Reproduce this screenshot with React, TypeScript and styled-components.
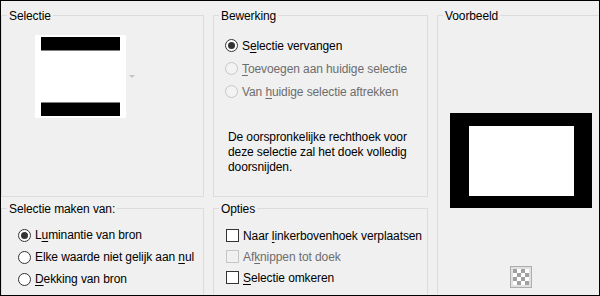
import React from 'react'
import styled, { createGlobalStyle } from 'styled-components'

const Global = createGlobalStyle`
  body {
    margin: 0;
    background: #ffffff;
  }
`

const Frame = styled.div`
  width: 600px;
  height: 296px;
  box-sizing: border-box;
  border: 1px solid #000;
  background: #f0f0f0;
  overflow: hidden;
  font-family: 'Liberation Sans', Arial, sans-serif;
  font-size: 12px;
  letter-spacing: -0.1px;
  color: #000;
  display: grid;
  grid-template-columns: 203px 215px 170px;
  grid-template-rows: 182px 100px;
  column-gap: 9px;
  row-gap: 11px;
  padding-top: 14px;
`

const Group = styled.section<{ $col: number; $row: string }>`
  position: relative;
  box-sizing: border-box;
  border: 1px solid #dcdcdc;
  grid-column: ${p => p.$col};
  grid-row: ${p => p.$row};
  display: flex;
  flex-direction: column;
`

const Legend = styled.span`
  position: absolute;
  top: -8px;
  left: 5px;
  padding: 0 2px;
  background: #f0f0f0;
  line-height: 16px;
  white-space: nowrap;
`

const ThumbRow = styled.div`
  display: flex;
  align-items: center;
  gap: 3px;
  padding: 19px 0 0 33px;
`

const Thumb = styled.div`
  width: 91px;
  height: 83px;
  box-sizing: border-box;
  background: #fff;
  padding: 2px 6px;
  display: flex;
  flex-direction: column;
  justify-content: space-between;
`

const Bar = styled.div<{ $top?: boolean }>`
  height: 13px;
  background: #000;
  ${p => (p.$top ? 'border-bottom: 1px solid #808080;' : 'border-top: 1px solid #808080;')}
`

const DropArrow = styled.span`
  width: 0;
  height: 0;
  border-left: 3px solid transparent;
  border-right: 3px solid transparent;
  border-top: 3px solid #c4c4c4;
`

const OptionList = styled.div<{ $pad: string }>`
  display: flex;
  flex-direction: column;
  padding: ${p => p.$pad};
`

const Option = styled.label<{ $h: number; $disabled?: boolean }>`
  display: flex;
  align-items: center;
  gap: 4px;
  height: ${p => p.$h}px;
  color: ${p => (p.$disabled ? '#6d6d6d' : '#000')};
  white-space: nowrap;
  line-height: 16px;
`

const RadioMark = styled.span<{ $checked?: boolean; $disabled?: boolean }>`
  width: 13px;
  height: 13px;
  box-sizing: border-box;
  border-radius: 50%;
  border: 1px solid ${p => (p.$disabled ? '#c6c6c6' : '#333')};
  background: ${p => (p.$disabled ? '#f3f3f3' : '#fff')};
  display: flex;
  align-items: center;
  justify-content: center;
  flex: none;

  &::after {
    content: '';
    display: ${p => (p.$checked ? 'block' : 'none')};
    width: 7px;
    height: 7px;
    border-radius: 50%;
    background: #333;
  }
`

const CheckMark = styled.span<{ $disabled?: boolean }>`
  width: 13px;
  height: 13px;
  box-sizing: border-box;
  border: 1px solid ${p => (p.$disabled ? '#c6c6c6' : '#333')};
  background: ${p => (p.$disabled ? '#f0f0f0' : '#fff')};
  flex: none;
`

const Key = styled.u`
  text-decoration-thickness: 1px;
  text-underline-offset: 2px;
`

const Note = styled.p`
  margin: 27px 0 0 14px;
  line-height: 15px;
`

const PreviewArea = styled.div`
  display: flex;
  flex-direction: column;
  align-items: flex-start;
  padding: 97px 0 0 12px;
`

const PreviewFrame = styled.div`
  border-style: solid;
  border-color: #000;
  border-width: 13px 18px 12px 19px;
  width: 105px;
  height: 70px;
  background: #fff;
`

const CheckerButton = styled.button`
  margin: 58px 0 0 60px;
  width: 22px;
  height: 22px;
  padding: 0;
  box-sizing: border-box;
  border: 1px solid #adadad;
  background: #e1e1e1;
  display: flex;
  align-items: center;
  justify-content: center;
`

const Checker = () => (
  <svg width="16" height="16" viewBox="0 0 16 16">
    <rect width="16" height="16" fill="#fff" />
    {[0, 1, 2, 3].map(r =>
      [0, 1, 2, 3].map(c =>
        (r + c) % 2 === 0 ? <rect key={`${r}-${c}`} x={c * 4} y={r * 4} width="4" height="4" fill="#a0a0a0" /> : null
      )
    )}
  </svg>
)

export default function App() {
  return (
    <>
      <Global />
      <Frame>
        <Group $col={1} $row="1">
          <Legend>Selectie</Legend>
          <ThumbRow>
            <Thumb>
              <Bar $top />
              <Bar />
            </Thumb>
            <DropArrow />
          </ThumbRow>
        </Group>

        <Group $col={2} $row="1">
          <Legend>Bewerking</Legend>
          <OptionList $pad="18px 0 0 11px">
            <Option $h={23}>
              <RadioMark $checked />
              <span>S<Key>e</Key>lectie vervangen</span>
            </Option>
            <Option $h={23} $disabled>
              <RadioMark $disabled />
              <span><Key>T</Key>oevoegen aan huidige selectie</span>
            </Option>
            <Option $h={23} $disabled>
              <RadioMark $disabled />
              <span>Van <Key>h</Key>uidige selectie aftrekken</span>
            </Option>
          </OptionList>
          <Note>
            De oorspronkelijke rechthoek voor
            <br />
            deze selectie zal het doek volledig
            <br />
            doorsnijden.
          </Note>
        </Group>

        <Group $col={3} $row="1 / span 2">
          <Legend>Voorbeeld</Legend>
          <PreviewArea>
            <PreviewFrame />
            <CheckerButton>
              <Checker />
            </CheckerButton>
          </PreviewArea>
        </Group>

        <Group $col={1} $row="2">
          <Legend>Selectie maken van:</Legend>
          <OptionList $pad="15px 0 0 16px">
            <Option $h={22}>
              <RadioMark $checked />
              <span>L<Key>u</Key>minantie van bron</span>
            </Option>
            <Option $h={22}>
              <RadioMark />
              <span>Elke waarde niet gelijk aan <Key>n</Key>ul</span>
            </Option>
            <Option $h={22}>
              <RadioMark />
              <span><Key>D</Key>ekking van bron</span>
            </Option>
          </OptionList>
        </Group>

        <Group $col={2} $row="2">
          <Legend>Opties</Legend>
          <OptionList $pad="16px 0 0 12px">
            <Option $h={21}>
              <CheckMark />
              <span>Naar <Key>l</Key>inkerbovenhoek verplaatsen</span>
            </Option>
            <Option $h={21} $disabled>
              <CheckMark $disabled />
              <span>Af<Key>k</Key>nippen tot doek</span>
            </Option>
            <Option $h={21}>
              <CheckMark />
              <span><Key>S</Key>electie omkeren</span>
            </Option>
          </OptionList>
        </Group>
      </Frame>
    </>
  )
}
